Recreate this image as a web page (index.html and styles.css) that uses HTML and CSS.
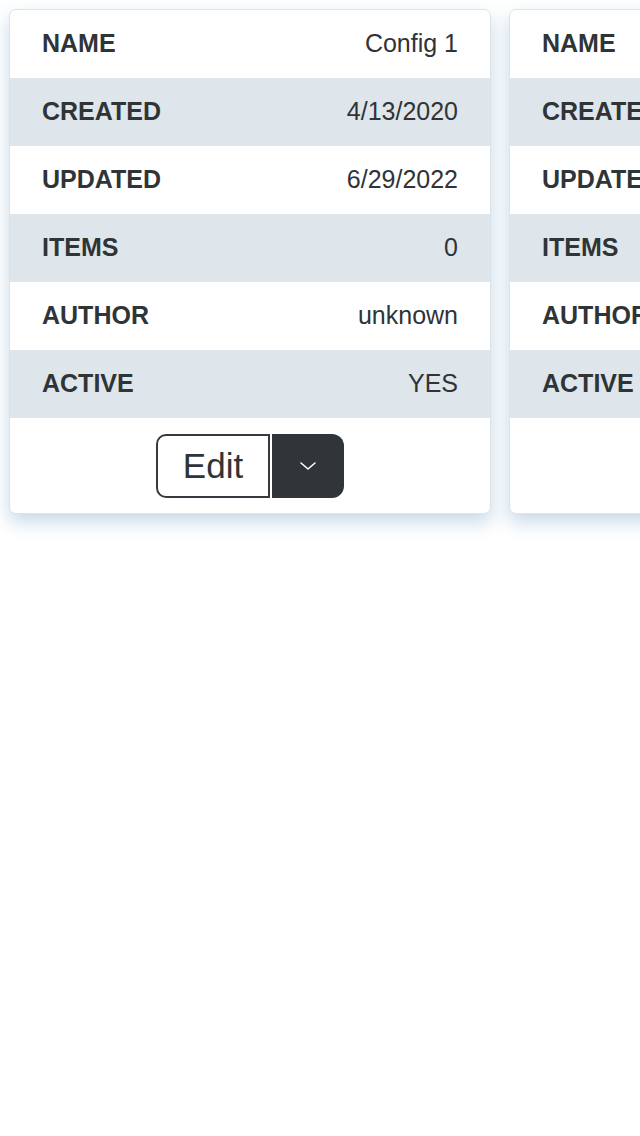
FILE: index.html
```html
<!DOCTYPE html>
<html>
<head>
<meta charset="utf-8">
<link rel="stylesheet" href="styles.css">
</head>
<body>
<div class="cards">
  <div class="card">
    <div class="row"><span class="label">NAME</span><span class="value">Config 1</span></div>
    <div class="row alt"><span class="label">CREATED</span><span class="value">4/13/2020</span></div>
    <div class="row"><span class="label">UPDATED</span><span class="value">6/29/2022</span></div>
    <div class="row alt"><span class="label">ITEMS</span><span class="value">0</span></div>
    <div class="row"><span class="label">AUTHOR</span><span class="value">unknown</span></div>
    <div class="row alt"><span class="label">ACTIVE</span><span class="value">YES</span></div>
    <div class="footer">
      <div class="btn-group">
        <button class="btn-edit">Edit</button>
        <button class="btn-drop"><svg width="20" height="12" viewBox="0 0 20 12"><path d="M3 3 L10 9 L17 3" fill="none" stroke="#ffffff" stroke-width="1.6" stroke-linecap="round" stroke-linejoin="round"/></svg></button>
      </div>
    </div>
  </div>
  <div class="card">
    <div class="row"><span class="label">NAME</span><span class="value">Config 2</span></div>
    <div class="row alt"><span class="label">CREATED</span><span class="value">4/13/2020</span></div>
    <div class="row"><span class="label">UPDATED</span><span class="value">6/29/2022</span></div>
    <div class="row alt"><span class="label">ITEMS</span><span class="value">0</span></div>
    <div class="row"><span class="label">AUTHOR</span><span class="value">unknown</span></div>
    <div class="row alt"><span class="label">ACTIVE</span><span class="value">YES</span></div>
    <div class="footer">
      <div class="btn-group">
        <button class="btn-edit">Edit</button>
        <button class="btn-drop"><svg width="20" height="12" viewBox="0 0 20 12"><path d="M3 3 L10 9 L17 3" fill="none" stroke="#ffffff" stroke-width="1.6" stroke-linecap="round" stroke-linejoin="round"/></svg></button>
      </div>
    </div>
  </div>
</div>
</body>
</html>
```

FILE: styles.css
```css
html {
  margin: 0;
  padding: 0;
  background: #ffffff;
  overflow: hidden;
}
body {
  margin: 0;
  font-family: "Liberation Sans", Arial, sans-serif;
  color: #2f3437;
  padding: 9px 0 40px 9px;
}
.cards {
  display: flex;
  gap: 18px;
  width: 1200px;
}
.card {
  flex: 0 0 482px;
  box-sizing: border-box;
  width: 482px;
  border: 1px solid #dce4ea;
  border-radius: 7px;
  background: #ffffff;
  overflow: hidden;
  box-shadow: 0 8px 18px rgba(70, 130, 180, 0.3);
}
.row {
  box-sizing: border-box;
  height: 68px;
  display: flex;
  align-items: center;
  justify-content: space-between;
  padding: 0 32px 2px;
  font-size: 25px;
  line-height: 1;
}
.row.alt {
  background: #dee6ec;
}
.label {
  font-weight: bold;
}
.value {
  font-weight: normal;
}
.footer {
  display: flex;
  justify-content: center;
  padding: 16px 0 15px;
}
.btn-group {
  display: flex;
  gap: 2px;
}
.btn-edit {
  font-family: "Liberation Sans", Arial, sans-serif;
  font-size: 35px;
  color: #2f3437;
  background: #ffffff;
  border: 2px solid #343a40;
  border-radius: 10px 0 0 10px;
  height: 64px;
  width: 114px;
  padding: 0;
}
.btn-drop {
  background: #2f3538;
  border: none;
  border-radius: 0 12px 12px 0;
  height: 64px;
  width: 72px;
  padding: 0;
  display: flex;
  align-items: center;
  justify-content: center;
}
```
